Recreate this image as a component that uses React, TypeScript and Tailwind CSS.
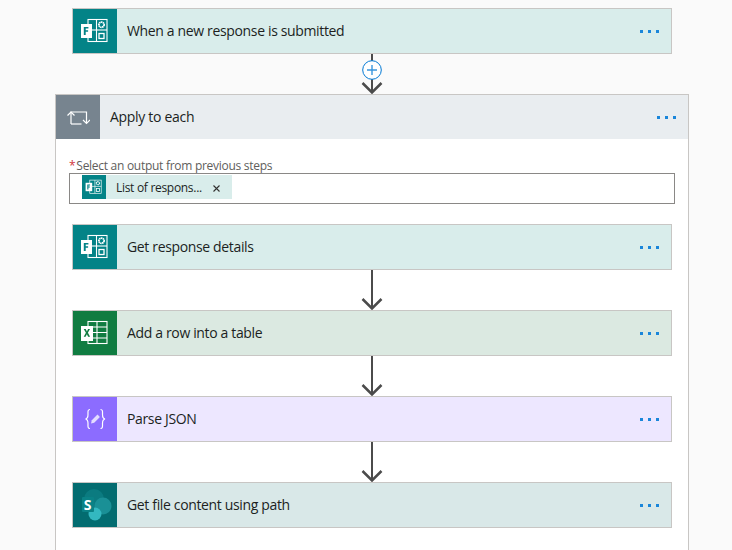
import React from "react";

const font = { fontFamily: '"Open Sans","Noto Sans",sans-serif' };

function FormsIcon({ size = 30, fg = "#038387" }: { size?: number; fg?: string }) {
  return (
    <svg width={size} height={size} viewBox="0 0 30 30" fill="none">
      <rect x="8" y="3.500" width="19" height="22" stroke="#fff" strokeWidth="1.100" />
      <path d="M8 14h19" stroke="#fff" strokeWidth="1.100" />
      <path d="M16.500 3.500v22" stroke="#fff" strokeWidth="1.100" />
      <circle cx="21.500" cy="8.700" r="2.600" stroke="#fff" strokeWidth="1.800" strokeDasharray="1.500 .4" />
      <rect x="19" y="17.500" width="5" height="5" stroke="#fff" strokeWidth="1.300" />
      <rect x="1" y="8" width="11" height="14" fill="#fff" />
      <path d="M3.800 19V11h4.600v1.500H5.700v1.800h2.400v1.400H5.700V19z" fill={fg} />
    </svg>
  );
}

function ExcelIcon() {
  return (
    <svg width="30" height="30" viewBox="0 0 30 30" fill="none">
      <rect x="8" y="3.500" width="19" height="22" stroke="#fff" strokeWidth="1.100" />
      <path d="M17 3.500v22M8 9h19M8 14.500h19M8 20h19" stroke="#fff" strokeWidth="1.100" />
      <rect x="1" y="8" width="12" height="15" fill="#fff" />
      <path d="M3.700 11h2l1.200 2.400L8.100 11H10l-2.100 3.800 2.200 4H8.100l-1.200-2.500-1.300 2.500H3.700l2.200-4z" fill="#107c41" />
    </svg>
  );
}

function JsonIcon() {
  return (
    <svg width="30" height="30" viewBox="0 0 30 30" fill="none">
      <path d="M10 5.500C7.500 5.500 8 8 8 10.500s0 4-2.500 4.500C8 15.500 8 17 8 19.500s-.5 5 2 5M20.500 5.500c2.500 0 2 2.500 2 5s0 4 2.500 4.500c-2.500.5-2.500 2-2.500 4.500s.5 5-2 5" stroke="#fff" strokeWidth="1.200" />
      <path d="M11 19.500l.8-3.200 5.700-5.800 2.400 2.400-5.700 5.800z" fill="#e4dcff" />
    </svg>
  );
}

function SharePointIcon() {
  return (
    <svg width="34" height="34" viewBox="0 0 34 34">
      <circle cx="16" cy="11" r="10" fill="#0b7b80" />
      <circle cx="25" cy="18" r="8.500" fill="#1a9096" />
      <circle cx="17" cy="26" r="6.500" fill="#33b8c0" />
      <rect x="4" y="9" width="12" height="15" rx="1" fill="#0a8286" />
      <text x="5.800" y="21.500" fill="#fff" fontSize="14" fontWeight="700" fontFamily="Open Sans, sans-serif">S</text>
    </svg>
  );
}

function Dots() {
  return (
    <div className="flex gap-[5px] items-center">
      <span className="block w-[3px] h-[3px] bg-[#1a86da]" />
      <span className="block w-[3px] h-[3px] bg-[#1a86da]" />
      <span className="block w-[3px] h-[3px] bg-[#1a86da]" />
    </div>
  );
}

function Card({ icon, color, bg, title }: { icon: React.ReactNode; color: string; bg: string; title: string }) {
  return (
    <div className="w-[600px] h-[46px] border border-[#c8c6c4] flex items-center shrink-0" style={{ background: bg }}>
      <div className="w-[44px] h-full flex items-center justify-center shrink-0" style={{ background: color }}>
        {icon}
      </div>
      <div className="flex-1 pl-[10px] pb-[2px] text-[14px] tracking-[-0.35px] text-[#201f1e]">{title}</div>
      <div className="pr-[12px]"><Dots /></div>
    </div>
  );
}

function Arrow({ plus = false }: { plus?: boolean }) {
  return (
    <svg width="40" height="40" viewBox="0 0 40 40" fill="none" className="block shrink-0">
      <path d="M20 0v38" stroke="#4b4b4b" strokeWidth="2" />
      <path d="M10.500 29L20 38.500 29.500 29" stroke="#4b4b4b" strokeWidth="2.500" />
      {plus && (
        <>
          <circle cx="20" cy="16" r="9.300" fill="#fff" stroke="#0078d4" strokeWidth="1" />
          <path d="M15 16h10M20 11v10" stroke="#3a96dd" strokeWidth="1.400" />
        </>
      )}
    </svg>
  );
}

export default function App() {
  return (
    <div className="w-[732px] h-[550px] overflow-hidden bg-[#fafafa] flex flex-col pt-[8px]" style={font}>
      <div className="ml-[72px]">
        <Card icon={<FormsIcon />} color="#038387" bg="#d9edeb" title="When a new response is submitted" />
      </div>
      <div className="ml-[352px]"><Arrow plus /></div>
      <div className="ml-[55px] w-[634px] border border-[#c8c6c4] border-b-0 bg-white shrink-0 h-[460px]">
        <div className="h-[44px] bg-[#e9edf0] flex items-center">
          <div className="w-[44px] h-full bg-[#77848f] flex items-center justify-center shrink-0">
            <svg width="24" height="18" viewBox="0 0 24 18" fill="none" stroke="#fff" strokeWidth="1.200">
              <path d="M5 16V4h15.500v11" />
              <path d="M1.500 7.500L5 4l3.500 3.500" />
              <path d="M5 16h10.500" />
              <path d="M17 12l3.500 3.500L24 12" />
            </svg>
          </div>
          <div className="flex-1 pl-[10px] pb-[2px] text-[14px] tracking-[-0.3px] text-[#201f1e]">Apply to each</div>
          <div className="pr-[12px]"><Dots /></div>
        </div>
        <div className="px-[13px] pt-[20px]">
          <div className="text-[12px] leading-[14px] tracking-[-0.28px] text-[#605e5c] h-[14px] whitespace-nowrap">
            <span className="text-[#d13438] mr-[1px]">*</span>Select an output from previous steps
          </div>
          <div className="h-[31px] w-[606px] border border-[#8a8886] bg-white flex items-start pt-[1px] pl-[12px]">
            <div className="w-[150px] h-[24px] bg-[#d9edeb] flex items-center">
              <div className="w-[24px] h-[24px] bg-[#038387] flex items-center justify-center shrink-0">
                <FormsIcon size={18} />
              </div>
              <span className="ml-[10px] pt-[1px] text-[12px] tracking-[-0.3px] text-[#201f1e] w-[86px] whitespace-nowrap">List of respons...</span>
              <svg width="7" height="7" viewBox="0 0 7 7" className="ml-[11px] mt-[2px]" stroke="#323130" strokeWidth="1.100">
                <path d="M.5.500l6 6M6.500.500l-6 6" />
              </svg>
            </div>
          </div>
          <div className="flex flex-col items-start pl-[3px] pt-[20px]">
            <Card icon={<FormsIcon />} color="#038387" bg="#d9edeb" title="Get response details" />
            <div className="ml-[280px]"><Arrow /></div>
            <Card icon={<ExcelIcon />} color="#107c41" bg="#dbe9e1" title="Add a row into a table" />
            <div className="ml-[280px]"><Arrow /></div>
            <Card icon={<JsonIcon />} color="#8c6cff" bg="#ede7ff" title="Parse JSON" />
            <div className="ml-[280px]"><Arrow /></div>
            <Card icon={<SharePointIcon />} color="#036c70" bg="#d9e8e8" title="Get file content using path" />
          </div>
        </div>
      </div>
    </div>
  );
}
